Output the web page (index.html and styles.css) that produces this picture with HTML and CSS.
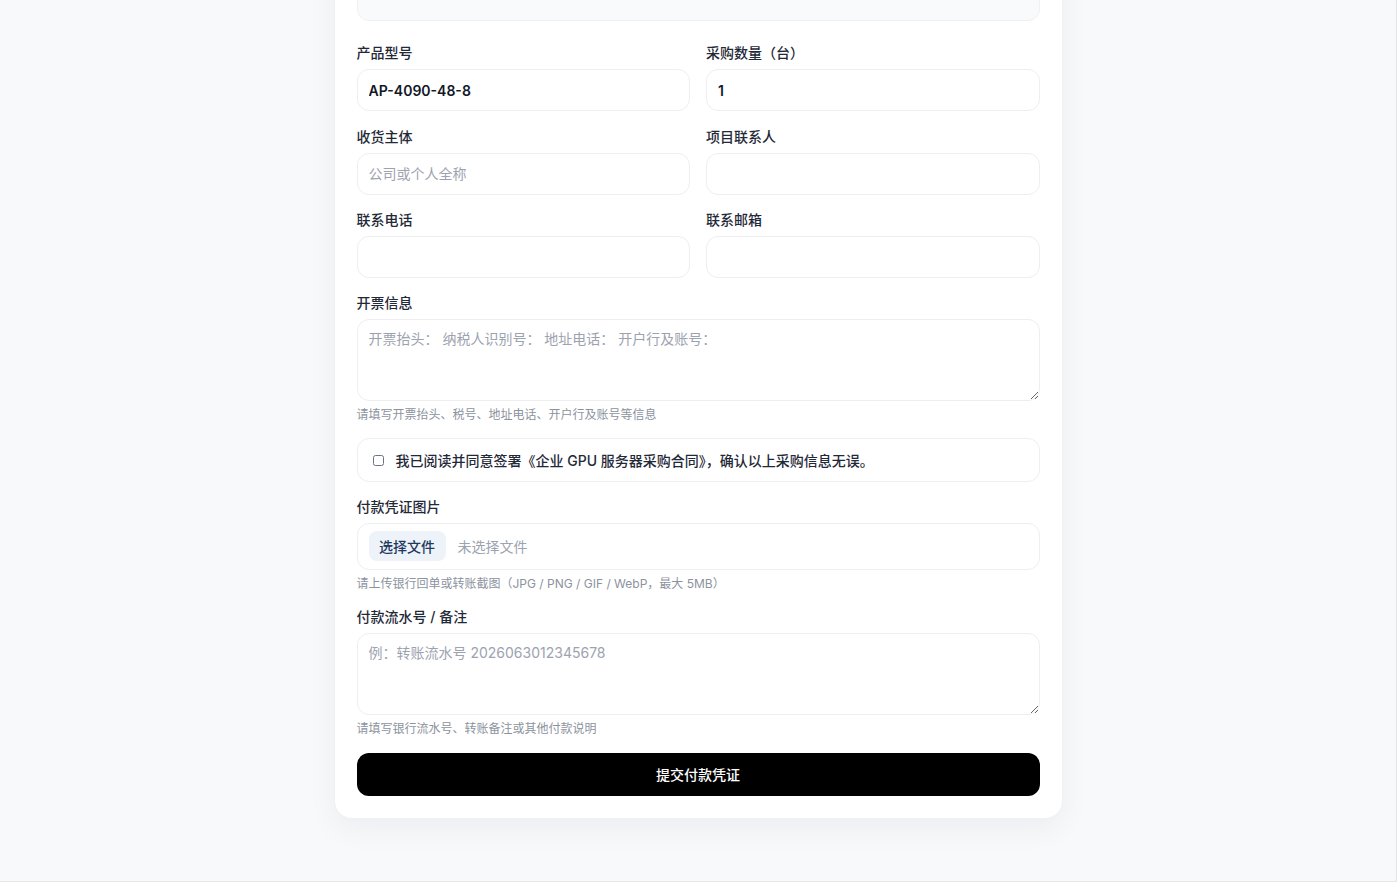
FILE: index.html
```html
<!DOCTYPE html>
<html lang="zh-CN">
<head>
<meta charset="utf-8">
<title>提交付款凭证</title>
<link rel="stylesheet" href="styles.css">
</head>
<body>
<div class="page">
  <div class="card">
    <div class="notice">请核对以下采购信息，确保内容准确无误后再提交</div>
    <form class="form">
      <div class="grid">
        <div class="field">
          <label class="label">产品型号</label>
          <input class="input strong" type="text" value="AP-4090-48-8">
        </div>
        <div class="field">
          <label class="label">采购数量（台）</label>
          <input class="input strong" type="text" value="1">
        </div>
        <div class="field">
          <label class="label">收货主体</label>
          <input class="input" type="text" placeholder="公司或个人全称">
        </div>
        <div class="field">
          <label class="label">项目联系人</label>
          <input class="input" type="text">
        </div>
        <div class="field">
          <label class="label">联系电话</label>
          <input class="input" type="text">
        </div>
        <div class="field">
          <label class="label">联系邮箱</label>
          <input class="input" type="text">
        </div>
      </div>
      <div class="field">
        <label class="label">开票信息</label>
        <textarea class="textarea" placeholder="开票抬头： 纳税人识别号： 地址电话： 开户行及账号："></textarea>
        <div class="hint">请填写开票抬头、税号、地址电话、开户行及账号等信息</div>
      </div>
      <label class="agree">
        <input class="check" type="checkbox">
        <span>我已阅读并同意签署《企业 GPU 服务器采购合同》，确认以上采购信息无误。</span>
      </label>
      <div class="field">
        <label class="label">付款凭证图片</label>
        <div class="file">
          <span class="file-btn">选择文件</span>
          <span class="file-name">未选择文件</span>
        </div>
        <div class="hint">请上传银行回单或转账截图（JPG / PNG / GIF / WebP，最大 5MB）</div>
      </div>
      <div class="field">
        <label class="label">付款流水号 / 备注</label>
        <textarea class="textarea" placeholder="例：转账流水号 2026063012345678"></textarea>
        <div class="hint">请填写银行流水号、转账备注或其他付款说明</div>
      </div>
      <button class="submit" type="button">提交付款凭证</button>
    </form>
  </div>
</div>
</body>
</html>
```

FILE: styles.css
```css
* { box-sizing: border-box; }
html, body { margin: 0; padding: 0; background: #ffffff; }
body {
  font-family: Inter, "Noto Sans CJK SC", sans-serif;
  color: #1f2937;
}
.page {
  width: 1397px;
  height: 882px;
  background: #f8f9fb;
  border-right: 1px solid #e4e6ea;
  border-bottom: 1px solid #e4e6ea;
  overflow: hidden;
  display: flex;
  flex-direction: column;
  align-items: center;
}
.card {
  width: 729px;
  margin-top: -80px;
  background: #ffffff;
  border: 1px solid #f0f1f4;
  border-radius: 18px;
  padding: 22px 22px 22px;
  box-shadow: 0 10px 30px rgba(15, 23, 42, 0.05);
}
.notice {
  background: #f8fafc;
  border: 1px solid #eef0f3;
  border-radius: 12px;
  padding: 14px 13px 0;
  height: 78px;
  font-size: 13px;
  line-height: 20px;
  color: #6b7280;
  margin-bottom: 22px;
}
.form {
  display: flex;
  flex-direction: column;
  gap: 14.5px;
}
.grid {
  display: grid;
  grid-template-columns: 1fr 1fr;
  column-gap: 16px;
  row-gap: 15.5px;
}
.field {
  display: flex;
  flex-direction: column;
}
.label {
  font-size: 14px;
  line-height: 20px;
  font-weight: 500;
  color: #1f2937;
  margin-bottom: 6px;
}
.input {
  height: 42px;
  border: 1px solid #eceef2;
  border-radius: 12px;
  padding: 0 11px;
  font-family: Inter, "Noto Sans CJK SC", sans-serif;
  font-size: 14px;
  color: #111827;
  background: #ffffff;
  outline: none;
}
.input.strong { font-weight: 600; }
.input::placeholder, .textarea::placeholder {
  color: #9ca3af;
  font-weight: 400;
}
.textarea {
  height: 82px;
  border: 1px solid #eceef2;
  border-radius: 12px;
  padding: 9px 11px;
  font-family: Inter, "Noto Sans CJK SC", sans-serif;
  font-size: 14px;
  line-height: 20px;
  color: #111827;
  background: #ffffff;
  resize: vertical;
  outline: none;
}
.hint {
  margin-top: 5px;
  font-size: 12px;
  line-height: 18px;
  color: #8c939e;
}
.agree {
  display: flex;
  align-items: center;
  gap: 12px;
  height: 44px;
  border: 1px solid #eceef2;
  border-radius: 12px;
  padding: 0 15px;
  font-size: 14px;
  font-weight: 500;
  color: #1f2937;
}
.check {
  appearance: none;
  -webkit-appearance: none;
  width: 11px;
  height: 11px;
  margin: 0;
  border: 1.3px solid #6b7280;
  border-radius: 2.5px;
  background: #ffffff;
}
.file {
  display: flex;
  align-items: center;
  gap: 12px;
  height: 47px;
  border: 1px solid #eceef2;
  border-radius: 12px;
  padding: 0 7px 0 11px;
}
.file-btn {
  display: inline-flex;
  align-items: center;
  justify-content: center;
  width: 77px;
  height: 30px;
  border-radius: 8px;
  background: #eef3f9;
  color: #1e3a5f;
  font-size: 14px;
  font-weight: 500;
}
.file-name {
  font-size: 14px;
  color: #9ca3af;
}
.submit {
  height: 43px;
  border: none;
  border-radius: 12px;
  background: #000000;
  color: #ffffff;
  font-family: Inter, "Noto Sans CJK SC", sans-serif;
  font-size: 14px;
  font-weight: 500;
}
```
